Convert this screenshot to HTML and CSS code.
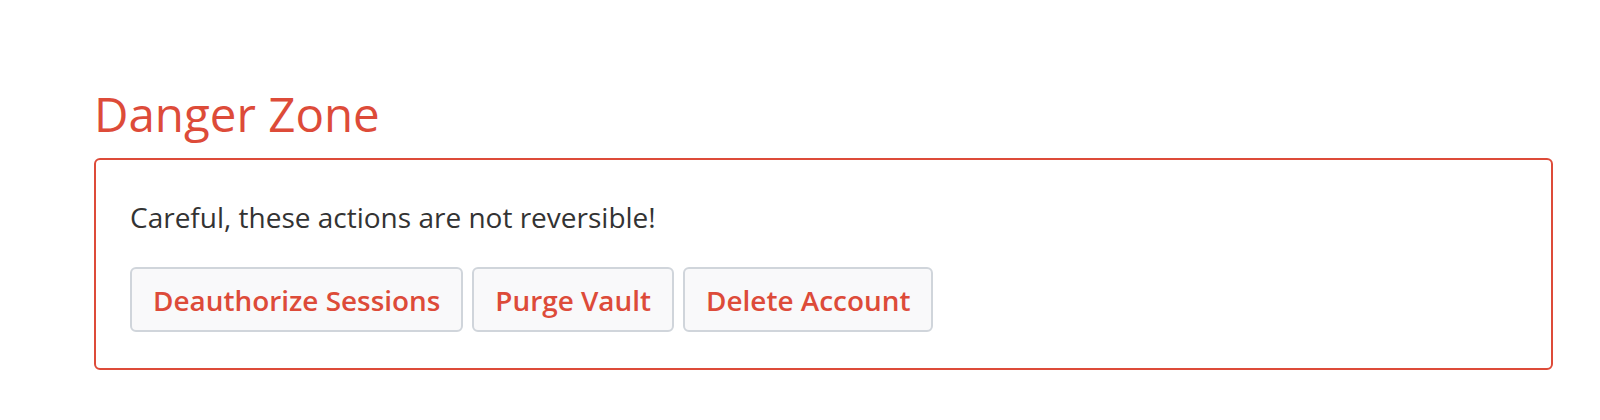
FILE: index.html
```html
<!DOCTYPE html>
<html lang="en">
<head>
    <meta charset="UTF-8">
    <meta name="viewport" content="width=device-width, initial-scale=1.0">
    <title>Danger Zone</title>
    <link rel="stylesheet" href="styles.css">
</head>
<body>
    <div class="page">
        <h2 class="danger-title">Danger Zone</h2>
        <div class="danger-card">
            <p class="danger-note">Careful, these actions are not reversible!</p>
            <div class="danger-actions">
                <button class="danger-button">Deauthorize Sessions</button>
                <button class="danger-button">Purge Vault</button>
                <button class="danger-button">Delete Account</button>
            </div>
        </div>
    </div>
</body>
</html>
```

FILE: styles.css
```css
body {
    margin: 0;
    font-family: "Open Sans", "Liberation Sans", sans-serif;
    background-color: #fff;
    color: #333;
}
.page {
    padding: 85px 47px 0 94px;
}
.danger-title {
    margin: 0 0 16px;
    font-size: 47.5px;
    font-weight: 400;
    line-height: 1.2;
    color: #dd4b39;
}
.danger-card {
    border: 2px solid #dd4b39;
    border-radius: 6px;
    padding: 37px 34px 36px;
}
.danger-note {
    margin: 0 0 30px;
    font-size: 28px;
    line-height: 40px;
    color: #333;
}
.danger-actions {
    display: flex;
    gap: 9px;
}
.danger-button {
    font-family: "Open Sans", "Liberation Sans", sans-serif;
    font-size: 27.9px;
    font-weight: 600;
    line-height: 40px;
    padding: 10.5px 21px;
    color: #dd4b39;
    background-color: #f9f9fa;
    border: 2px solid #d0d5db;
    border-radius: 6px;
    cursor: pointer;
}
```
